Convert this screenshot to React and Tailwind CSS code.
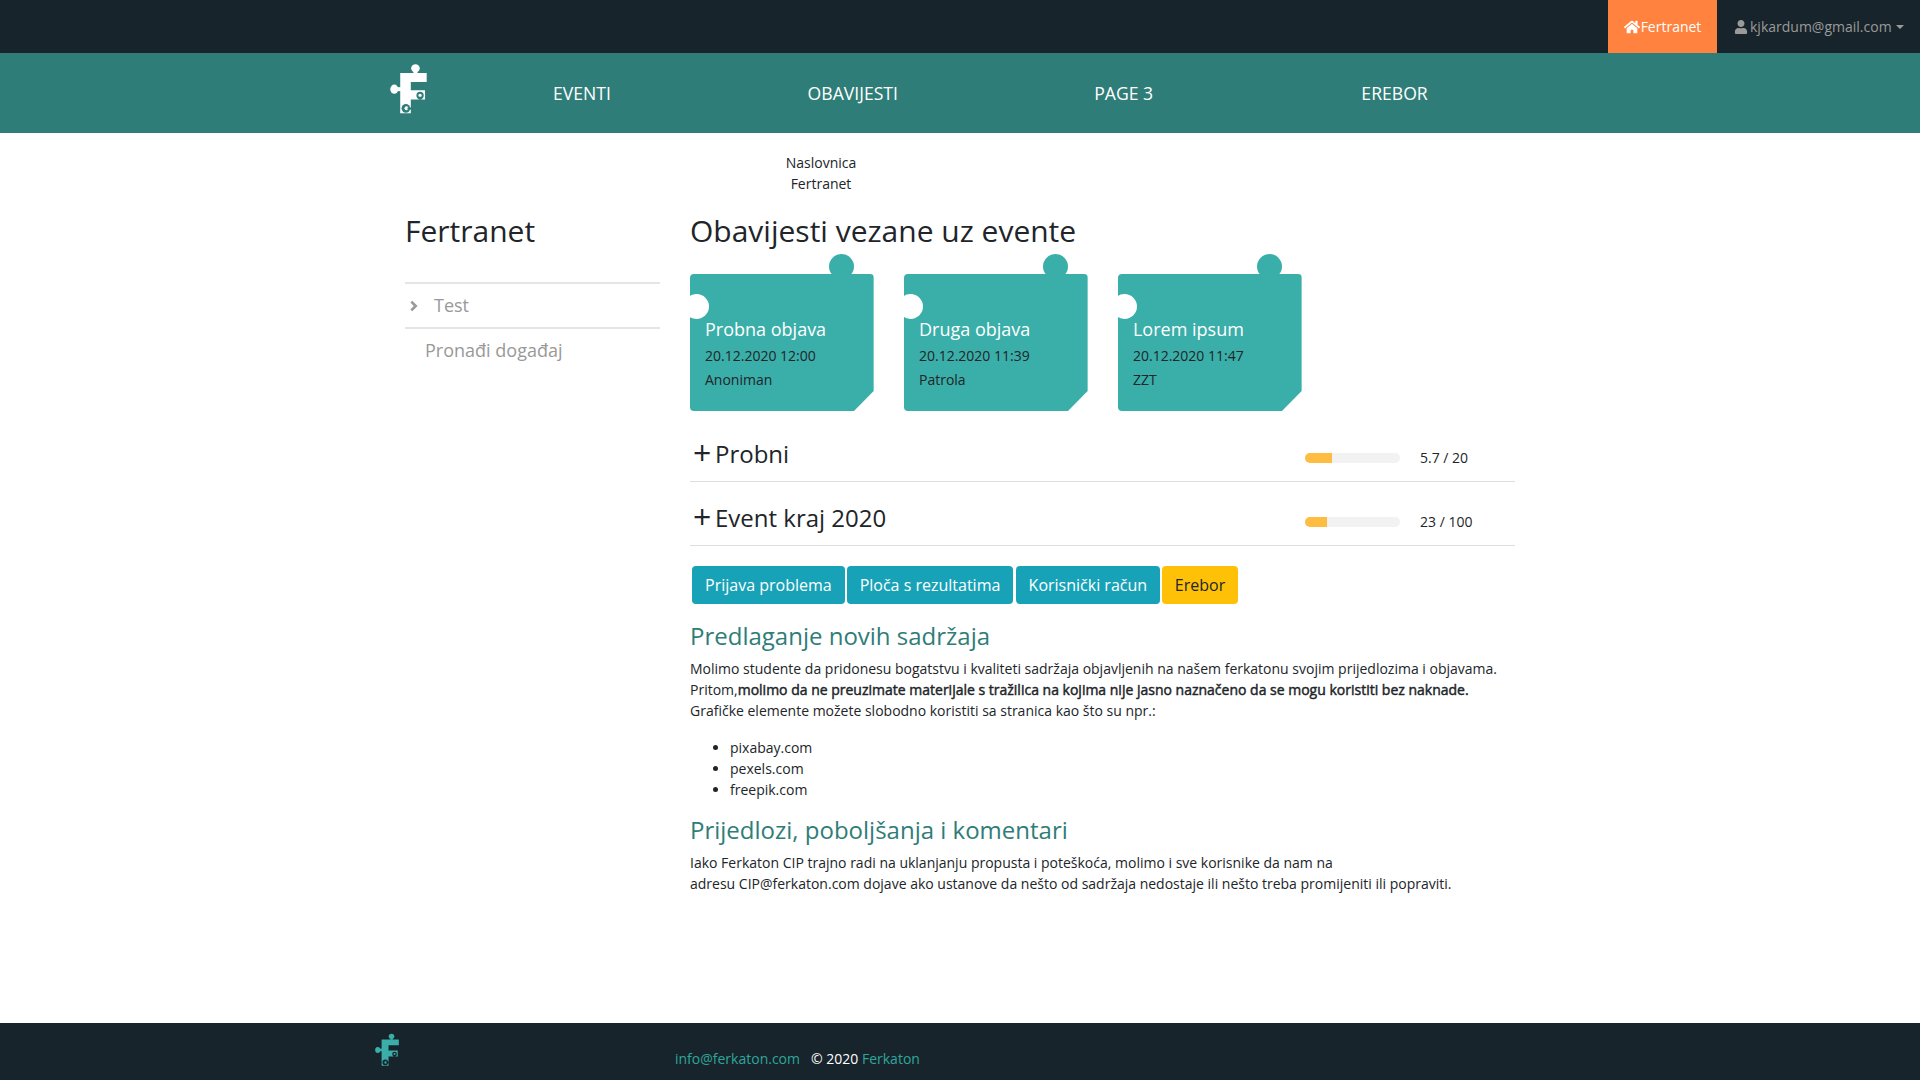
import { FaHome, FaUser } from "react-icons/fa";

const cards = [
  { title: "Probna objava", date: "20.12.2020 12:00", author: "Anoniman" },
  { title: "Druga objava", date: "20.12.2020 11:39", author: "Patrola" },
  { title: "Lorem ipsum", date: "20.12.2020 11:47", author: "ZZT" },
];

const events = [
  { name: "Probni", fill: 28, label: "5.7 / 20" },
  { name: "Event kraj 2020", fill: 23, label: "23 / 100" },
];

function Logo({ className, color, hole }) {
  return (
    <svg viewBox="50 30 130 170" className={className}>
      <ellipse cx="136" cy="54" rx="13" ry="12" fill={color} />
      <rect x="130" y="60" width="12" height="10" fill={color} />
      <ellipse cx="72" cy="117" rx="12" ry="14" fill={color} />
      <rect x="78" y="111" width="14" height="12" fill={color} />
      <path d="M90 68H170V95H122V120H165V148H122V165H122V190H90Z" fill={color} />
      <circle cx="150" cy="136" r="11" fill={hole} />
      <circle cx="150" cy="136" r="5" fill={color} />
      <rect x="146" y="140" width="8" height="9" fill={hole} />
      <circle cx="107" cy="175" r="13" fill={hole} />
      <circle cx="109" cy="175" r="6" fill={color} />
      <rect x="112" y="172" width="11" height="7" fill={hole} />
    </svg>
  );
}

function NoticeCard({ title, date, author }) {
  return (
    <div className="relative w-[183.67px] h-[137px]">
      <div className="absolute left-[138.75px] -top-[20px] w-[25px] h-[25px] rounded-full bg-[#3aaea8]" />
      <div className="relative h-full rounded-[4px] bg-[#3aaea8] pl-[15px] pt-[42px] [clip-path:polygon(0_0,100%_0,100%_117px,164px_100%,0_100%)]">
        <div className="absolute -left-[6px] top-[20px] w-[25px] h-[25px] rounded-full bg-white" />
        <div className="text-[18px] leading-[27px] text-white">{title}</div>
        <div className="mt-[2px] text-[14px] leading-[21px] text-[#212529]">{date}</div>
        <div className="mt-[3px] text-[14px] leading-[21px] text-[#212529]">{author}</div>
      </div>
    </div>
  );
}

function EventRow({ name, fill, label }) {
  return (
    <div className="flex items-center h-[64px] border-b border-[#dedede]">
      <div className="flex items-center flex-1 pl-[3px] pt-[8px] text-[24px] leading-[36px] text-[#212529]">
        <span className="w-[22px] -mt-[2px] text-[32px] leading-[36px]">+</span>
        {name}
      </div>
      <div className="flex items-center w-[210px] mt-[16px]">
        <div className="w-[95px] h-[10px] rounded-full bg-[#f2f2f2] overflow-hidden">
          <div className="h-full bg-[#ffbc42]" style={{ width: `${fill}%` }} />
        </div>
        <span className="ml-[20px] text-[14px] text-[#212529]">{label}</span>
      </div>
    </div>
  );
}

export default function App() {
  return (
    <div className="flex flex-col min-h-screen bg-white text-[14px] leading-[21px] text-[#212529] font-['Open_Sans',sans-serif]">
      {/* top bar */}
      <div className="flex justify-end h-[53px] bg-[#18242b]">
        <a className="flex items-center gap-[1px] w-[109px] justify-center bg-[#ff823e] text-white">
          <FaHome className="text-[16px]" />
          Fertranet
        </a>
        <a className="flex items-center gap-[2px] w-[203px] pl-[17px] text-[#9a9a9a]">
          <FaUser className="text-[14px]" />
          kjkardum@gmail.com
          <span className="ml-[2px] w-0 h-0 border-x-[4px] border-x-transparent border-t-[4px] border-t-[#9a9a9a]" />
        </a>
      </div>

      {/* nav */}
      <div className="h-[80px] bg-[#2f7d78]">
        <div className="flex items-center h-full w-[1140px] mx-auto">
          <div className="w-[56.5px] -mt-[9px] -ml-[3px] mr-[3px]">
            <Logo className="w-[43px] h-[57px]" color="#ffffff" hole="#2f7d78" />
          </div>
          {["EVENTI", "OBAVIJESTI", "PAGE 3", "EREBOR"].map((item) => (
            <a key={item} className="w-[271px] text-center text-[17.6px] text-white">
              {item}
            </a>
          ))}
        </div>
      </div>

      {/* content */}
      <div className="flex-1 w-[1140px] mx-auto flex">
        <aside className="w-[285px] px-[15px] pt-[77px]">
          <h2 className="text-[30px] leading-[42px] text-[#212529]">Fertranet</h2>
          <div className="mt-[30px] w-[255px] border-t-2 border-[#e5e5e5]">
            <div className="flex items-center h-[45px] border-b-2 border-[#e5e5e5] pl-[4px] text-[18px] text-[#999999]">
              <svg viewBox="0 0 8 11" className="w-[9px] h-[12px]">
                <path d="M2 1.5L6 5.5L2 9.5" fill="none" stroke="#999999" strokeWidth="2.4" />
              </svg>
              <span className="ml-[16px]">Test</span>
            </div>
            <div className="h-[43px] flex items-center pl-[20px] text-[18px] text-[#999999]">Pronađi događaj</div>
          </div>
        </aside>

        <main className="w-[855px] px-[15px] pt-[19px]">
          <div className="w-[262px] text-center">
            <div>Naslovnica</div>
            <div>Fertranet</div>
          </div>
          <h2 className="mt-[16px] text-[30px] leading-[42px] text-[#212529]">Obavijesti vezane uz evente</h2>

          <div className="flex gap-[30.33px] mt-[22px]">
            {cards.map((card) => (
              <NoticeCard key={card.title} {...card} />
            ))}
          </div>

          <div className="mt-[7px]">
            <EventRow {...events[0]} />
            <EventRow {...events[1]} />
          </div>

          <div className="flex gap-[2px] mt-[20px] ml-[2px] text-[16px]">
            <a className="flex items-center h-[38px] px-[13px] rounded-[4px] bg-[#17a2b8] text-white">Prijava problema</a>
            <a className="flex items-center h-[38px] px-[13px] rounded-[4px] bg-[#17a2b8] text-white">Ploča s rezultatima</a>
            <a className="flex items-center h-[38px] ml-[0.5px] px-[12.75px] rounded-[4px] bg-[#17a2b8] text-white">Korisnički račun</a>
            <a className="flex items-center h-[38px] px-[13px] rounded-[4px] bg-[#ffc107] text-[#212529]">Erebor</a>
          </div>

          <h4 className="mt-[14px] text-[24px] leading-[36px] text-[#2f7d78]">Predlaganje novih sadržaja</h4>
          <p className="mt-[4px]">
            Molimo studente da pridonesu bogatstvu i kvaliteti sadržaja objavljenih na našem ferkatonu svojim prijedlozima i objavama.
            <br />
            Pritom,<span className="[-webkit-text-stroke:0.45px_#212529]">molimo da ne preuzimate materijale s tražilica na kojima nije jasno naznačeno da se mogu koristiti bez naknade.</span>
            <br />
            Grafičke elemente možete slobodno koristiti sa stranica kao što su npr.:
          </p>
          <ul className="mt-[16px] pl-[40px] list-disc">
            <li>pixabay.com</li>
            <li>pexels.com</li>
            <li>freepik.com</li>
          </ul>
          <h4 className="mt-[12px] text-[24px] leading-[36px] text-[#2f7d78]">Prijedlozi, poboljšanja i komentari</h4>
          <p className="mt-[4px]">
            Iako Ferkaton CIP trajno radi na uklanjanju propusta i poteškoća, molimo i sve korisnike da nam na
            <br />
            adresu CIP@ferkaton.com dojave ako ustanove da nešto od sadržaja nedostaje ili nešto treba promijeniti ili popraviti.
          </p>
        </main>
      </div>

      {/* footer */}
      <div className="h-[57px] bg-[#18242b]">
        <div className="relative flex w-[1140px] mx-auto h-full">
          <div className="w-[285px] pt-[8px] -ml-[17px] mr-[17px]">
            <Logo className="w-[28px] h-[37px]" color="#3aaea8" hole="#18242b" />
          </div>
          <div className="pt-[25px]">
            <a className="text-[#2fa69c]">info@ferkaton.com</a>
            <span className="ml-[11px] text-white">© 2020 </span>
            <a className="text-[#2fa69c]">Ferkaton</a>
          </div>
        </div>
      </div>
    </div>
  );
}
